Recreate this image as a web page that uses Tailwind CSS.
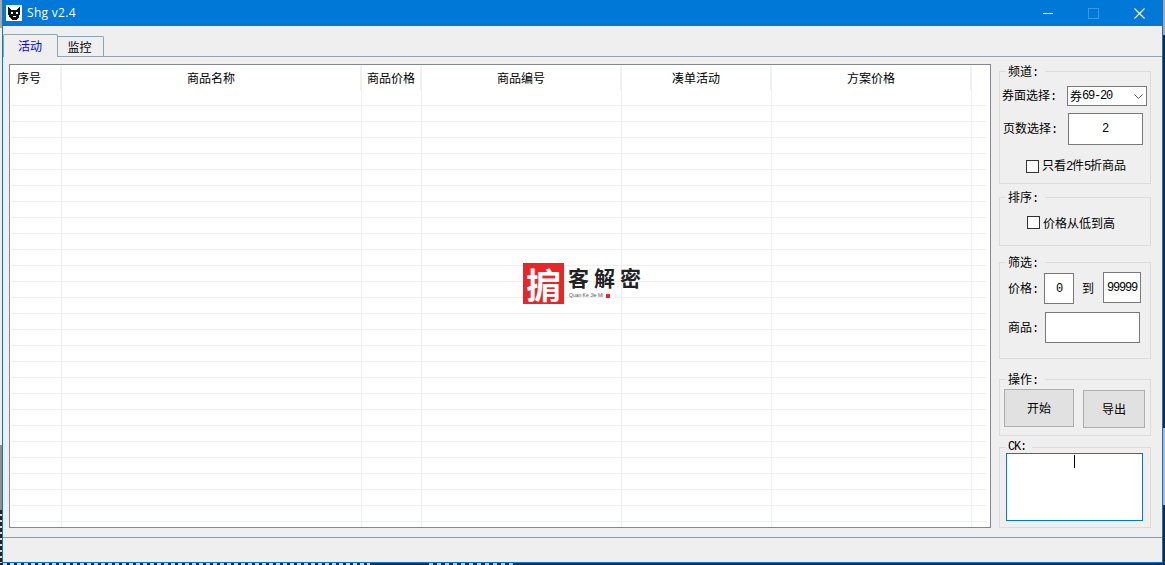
<!DOCTYPE html>
<html lang="zh-CN">
<head>
    <meta charset="UTF-8">
    <title>Shg v2.4</title>
    <script src="https://cdn.jsdelivr.net/npm/@tailwindcss/browser@4"></script>
</head>
<body class="w-[1165px] h-[565px] overflow-hidden bg-[#222a2e] text-[12px] leading-none text-black font-['Noto_Sans_CJK_SC',sans-serif]">
    <div class="flex h-[563px]">
        <!-- desktop behind the window, left edge -->
        <div class="w-[2px] flex flex-col shrink-0">
            <div class="h-[28px] bg-[#a8a8a8]"></div>
            <div class="h-[417px] bg-[#eeeeee]"></div>
            <div class="h-[65px] bg-[#8f8f8f]"></div>
            <div class="flex-1 bg-[repeating-linear-gradient(180deg,#222222_0,#222222_4px,#d8d8d8_4px,#d8d8d8_6px)]"></div>
        </div>

        <!-- Window -->
        <div class="w-[1161px] h-[563px] shrink-0 flex flex-col bg-[#efefef] border-x border-b border-[#0078d7]">
            <!-- Title bar -->
            <div class="h-[26px] -mx-px bg-[#0078d7] flex items-center shrink-0 text-white">
                <svg class="ml-[4px] w-4 h-4" viewBox="0 0 16 16" shape-rendering="crispEdges">
                    <rect width="16" height="16" fill="#fff"/>
                    <path d="M2 1l3 4h5l4-4v7l-1 4-3 3H6L3 12 2 8z" fill="#111"/>
                    <path d="M5 7h2v2H5zM10 7h2v2h-2zM7 11h3v1H7zM3 13h1v2H3zM13 13h1v2h-1zM1 9h1v3H1z" fill="#fff"/>
                </svg>
                <span class="ml-[5px] font-['Open_Sans',sans-serif] text-[12px] tracking-[0.3px] -mt-[1px]">Shg v2.4</span>
                <div class="ml-auto flex items-center h-full">
                    <svg class="w-[10px] h-[10px] mr-[35px]" viewBox="0 0 10 10"><path d="M0 5.5h10" stroke="#fff" stroke-width="1"/></svg>
                    <svg class="w-[11px] h-[11px] mr-[35px]" viewBox="0 0 11 11"><rect x="0.5" y="0.5" width="10" height="10" fill="none" stroke="#3d97e3"/></svg>
                    <svg class="w-[11px] h-[11px] mr-[18px]" viewBox="0 0 11 11"><path d="M0.5 0.5l10 10M10.5 0.5l-10 10" stroke="#fff" stroke-width="1.1"/></svg>
                </div>
            </div>

            <!-- Tabs -->
            <div class="h-[31px] shrink-0 flex items-end border-b border-[#8fa5b5]">
                <div class="w-[55px] h-[23px] -mb-px pr-[1px] bg-[#efefef] border-x border-t border-[#8fa5b5] rounded-t-[2px] flex items-center justify-center text-[#0000ff]">活动</div>
                <div class="w-[46px] h-[20px] pr-[2px] border-r border-t border-[#8fa5b5] rounded-tr-[2px] flex items-center justify-center">监控</div>
            </div>

            <!-- Body -->
            <div class="h-[480px] shrink-0 flex pl-[6px]">
                <!-- Table -->
                <div class="relative mt-[7px] w-[982px] h-[464px] bg-white border border-[#828790] overflow-hidden">
                    <div class="h-[25px] flex items-center">
                        <div class="w-[52px] h-[24px] border-r-2 border-[#f0f0f0] pl-[7px] flex items-center">序号</div>
                        <div class="w-[300px] h-[24px] border-r-2 border-[#f0f0f0] flex items-center justify-center">商品名称</div>
                        <div class="w-[60px] h-[24px] border-r-2 border-[#f0f0f0] flex items-center justify-center">商品价格</div>
                        <div class="w-[200px] h-[24px] border-r-2 border-[#f0f0f0] flex items-center justify-center">商品编号</div>
                        <div class="w-[150px] h-[24px] border-r-2 border-[#f0f0f0] flex items-center justify-center">凑单活动</div>
                        <div class="w-[200px] h-[24px] border-r-2 border-[#f0f0f0] flex items-center justify-center">方案价格</div>
                    </div>
                    <div id="rows"></div>

                    <!-- watermark logo over the table -->
                    <div class="absolute left-[513px] top-[198px] flex">
                        <div class="w-[41px] h-[41px] bg-[#e8262a] text-white text-[35px] font-bold flex items-center justify-center">掮</div>
                        <div class="ml-[4px] pt-[4px]">
                            <div class="flex gap-[5px] text-[21px] font-bold text-[#222222]"><span>客</span><span>解</span><span>密</span></div>
                            <div class="flex items-center mt-[5px] ml-[1px] text-[5px] text-[#555555] font-['Liberation_Sans',sans-serif]">Quan Ke Jie Mi<span class="ml-[3px] w-[4px] h-[4px] bg-[#e8262a]"></span></div>
                        </div>
                    </div>
                </div>

                <!-- Sidebar -->
                <div class="ml-[8px] w-[152px] pt-[14px] flex flex-col">
                    <div class="relative h-[113px] border border-[#dcdcdc]">
                        <div class="absolute left-[6px] -top-[7px] px-[2px] pr-[6px] bg-[#efefef]">频道<span class="font-['Liberation_Mono',monospace]">:</span></div>
                        <div class="flex items-center pt-[14px] pl-[2px]">
                            <span class="w-[65px]">券面选择<span class="font-['Liberation_Mono',monospace]">:</span></span>
                            <div class="w-[80px] h-[20px] bg-white border border-[#7a7a7a] flex items-center pl-[2px]">券<span class="font-['Liberation_Mono',monospace] tracking-[-1.2px]">69-20</span>
                                <svg class="ml-auto mr-[3px] w-[9px] h-[5px]" viewBox="0 0 9 5"><path d="M0.5 0.5l4 4 4-4" fill="none" stroke="#555"/></svg>
                            </div>
                        </div>
                        <div class="flex items-center mt-[7px] pl-[3px]">
                            <span class="w-[65px]">页数选择<span class="font-['Liberation_Mono',monospace]">:</span></span>
                            <div class="w-[75px] h-[32px] bg-white border border-[#7a7a7a] flex items-center justify-center font-['Liberation_Mono',monospace]">2</div>
                        </div>
                        <div class="flex items-center mt-[14px] pl-[26px]">
                            <span class="w-[13px] h-[13px] bg-white border border-[#333333]"></span>
                            <span class="ml-[3px]">只看<span class="font-['Liberation_Mono',monospace] tracking-[-1.2px]">2</span>件<span class="font-['Liberation_Mono',monospace] tracking-[-1.2px]">5</span>折商品</span>
                        </div>
                    </div>

                    <div class="relative h-[49px] mt-[13px] border border-[#dcdcdc]">
                        <div class="absolute left-[6px] -top-[7px] px-[2px] pr-[6px] bg-[#efefef]">排序<span class="font-['Liberation_Mono',monospace]">:</span></div>
                        <div class="flex items-center pt-[18px] pl-[27px]">
                            <span class="w-[13px] h-[13px] bg-white border border-[#333333]"></span>
                            <span class="ml-[3px]">价格从低到高</span>
                        </div>
                    </div>

                    <div class="relative h-[97px] mt-[16px] border border-[#dcdcdc]">
                        <div class="absolute left-[6px] -top-[7px] px-[2px] pr-[6px] bg-[#efefef]">筛选<span class="font-['Liberation_Mono',monospace]">:</span></div>
                        <div class="flex items-start pt-[9px] pl-[8px]">
                            <span class="w-[36px] mt-[10px]">价格<span class="font-['Liberation_Mono',monospace]">:</span></span>
                            <div class="w-[30px] h-[31px] mt-[1px] bg-white border border-[#7a7a7a] flex items-center justify-center font-['Liberation_Mono',monospace] tracking-[-1.2px]">0</div>
                            <span class="ml-[8px] mt-[10px]">到</span>
                            <div class="ml-[9px] w-[38px] h-[31px] bg-white border border-[#7a7a7a] flex items-center justify-center font-['Liberation_Mono',monospace] tracking-[-1.2px]">99999</div>
                        </div>
                        <div class="flex items-center mt-[8px] pl-[8px]">
                            <span class="w-[37px]">商品<span class="font-['Liberation_Mono',monospace]">:</span></span>
                            <div class="w-[95px] h-[31px] bg-white border border-[#7a7a7a]"></div>
                        </div>
                    </div>

                    <div class="relative h-[57px] mt-[20px] border border-[#dcdcdc]">
                        <div class="absolute left-[6px] -top-[7px] px-[2px] pr-[6px] bg-[#efefef]">操作<span class="font-['Liberation_Mono',monospace]">:</span></div>
                        <div class="flex items-start pt-[9px] pl-[4px]">
                            <div class="w-[70px] h-[38px] bg-[#e1e1e1] border border-[#adadad] flex items-center justify-center">开始</div>
                            <div class="ml-[9px] mt-[1px] w-[62px] h-[38px] bg-[#e1e1e1] border border-[#adadad] flex items-center justify-center">导出</div>
                        </div>
                    </div>

                    <div class="relative h-[81px] mt-[11px] border border-[#dcdcdc]">
                        <div class="absolute left-[6px] -top-[7px] px-[2px] pr-[6px] bg-[#efefef] font-['Liberation_Mono',monospace] tracking-[-1.2px]">CK:</div>
                        <div class="relative ml-[6px] mt-[5px] w-[137px] h-[68px] bg-white border border-[#0078d7]">
                            <span class="absolute left-[67px] top-[1px] w-px h-[13px] bg-black"></span>
                        </div>
                    </div>
                </div>
            </div>

            <!-- Status bar -->
            <div class="flex-1 border-t border-[#8f9ba5]"></div>
        </div>

        <!-- desktop behind the window, right edge -->
        <div class="w-[2px] flex flex-col shrink-0">
            <div class="h-[35px] bg-[#a8a8a8]"></div>
            <div class="h-[393px] bg-[#222a2e]"></div>
            <div class="h-[77px] bg-[#b4b8ba]"></div>
            <div class="flex-1 bg-[#222a2e]"></div>
        </div>
    </div>
    <div class="h-[2px] flex">
        <div class="w-[370px] bg-[repeating-linear-gradient(90deg,#222222_0,#222222_3px,#d8d8d8_3px,#d8d8d8_7px)]"></div>
        <div class="ml-[55px] w-[90px] bg-[repeating-linear-gradient(90deg,#222222_0,#222222_4px,#a8c8e0_4px,#a8c8e0_8px)]"></div>
    </div>

    <script>
        // empty rows, 16px each; the last one is cut off by the table's bottom edge
        let html = '';
        for (let i = 0; i < 28; i++) {
            html += `
                <div class="h-[16px] ml-px w-[976px] flex border-b border-[#f0f0f0]">
                    <div class="w-[51px] border-r border-[#f0f0f0]"></div>
                    <div class="w-[300px] border-r border-[#f0f0f0]"></div>
                    <div class="w-[60px] border-r border-[#f0f0f0]"></div>
                    <div class="w-[200px] border-r border-[#f0f0f0]"></div>
                    <div class="w-[150px] border-r border-[#f0f0f0]"></div>
                    <div class="w-[200px] border-r border-[#f0f0f0]"></div>
                </div>`;
        }
        document.getElementById('rows').innerHTML = html;
    </script>
</body>
</html>
